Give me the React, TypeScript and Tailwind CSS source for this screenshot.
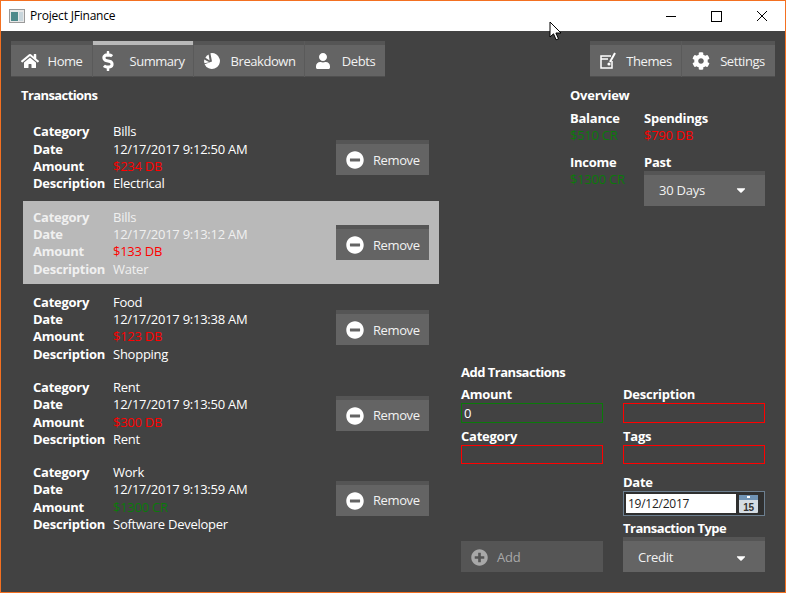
import React from 'react';
import { FaHome, FaDollarSign, FaUser, FaCog, FaMinusCircle, FaPlusCircle, FaCaretDown } from 'react-icons/fa';

type Tx = { category: string; date: string; amount: string; credit?: boolean; description: string; selected?: boolean };

const transactions: Tx[] = [
  { category: 'Bills', date: '12/17/2017 9:12:50 AM', amount: '$234 DB', description: 'Electrical' },
  { category: 'Bills', date: '12/17/2017 9:13:12 AM', amount: '$133 DB', description: 'Water', selected: true },
  { category: 'Food', date: '12/17/2017 9:13:38 AM', amount: '$123 DB', description: 'Shopping' },
  { category: 'Rent', date: '12/17/2017 9:13:50 AM', amount: '$300 DB', description: 'Rent' },
  { category: 'Work', date: '12/17/2017 9:13:59 AM', amount: '$1300 CR', credit: true, description: 'Software Developer' },
];

const ThemesIcon = () => (
  <svg width="18" height="18" viewBox="0 0 18 18" fill="none" stroke="#fff" strokeWidth="1.5">
    <path d="M12 4H2v12h11V9" />
    <path d="M2 7h7" />
    <path d="M16 1l-5 9" strokeWidth="2" />
    <circle cx="10" cy="12" r="1.6" fill="#fff" stroke="none" />
  </svg>
);

const PieIcon = () => (
  <svg width="18" height="18" viewBox="0 0 18 18" fill="#fff">
    <path d="M9 9.5L7.4 1.2A8 8 0 1 1 1.6 12.2z" />
    <path d="M6.6 8.4L5.6 2.6A8 8 0 0 0 2.4 5.8z" />
    <path d="M6.4 10.2L1.4 11.2A8 8 0 0 1 1.2 7.6z" />
  </svg>
);

const NavButton = ({ icon, label, width, gap, active }: { icon: React.ReactNode; label: string; width: string; gap: string; active?: boolean }) => (
  <div className={`flex flex-col ${width} border-r border-[#5a5a5a] last:border-r-0`}>
    <div className={`h-[4px] ${active ? 'bg-[#b9b9b9]' : 'bg-[#555555]'}`} />
    <div className={`flex h-[31px] items-center justify-center pt-[1px] ${gap} bg-[#646464] tracking-[-0.45px] text-[#f2f2f2]`}>
      {icon}
      <span className="pt-[1px]">{label}</span>
    </div>
    <div className="h-[1px] bg-[#4f4f4f]" />
  </div>
);

const RemoveButton = () => (
  <div className="flex w-[93px] flex-col">
    <div className="h-[4px] bg-[#555555]" />
    <div className="flex h-[31px] items-center gap-[9px] bg-[#646464] pl-[10px] pt-[1px] tracking-[-0.4px] text-[#f2f2f2]">
      <FaMinusCircle className="text-[18px] text-white" />
      <span className="pt-[1px]">Remove</span>
    </div>
  </div>
);

const Dropdown = ({ label, height, inset }: { label: string; height: string; inset: string }) => (
  <div className="flex w-full flex-col">
    <div className="h-[4px] bg-[#555555]" />
    <div className={`flex ${height} ${inset} items-center justify-between bg-[#646464] pl-[15px] pr-[17px] text-[#f2f2f2]`}>
      <span>{label}</span>
      <FaCaretDown className="text-[14px] text-white" />
    </div>
  </div>
);

const Row = ({ tx }: { tx: Tx }) => (
  <div className={`flex h-[83.16px] items-center justify-between pl-[10px] pr-[10px] ${tx.selected ? 'bg-[#b9b9b9]' : ''}`}>
    <div className={`grid grid-cols-[80px_1fr] pt-[1px] leading-[17.29px] ${tx.selected ? 'text-[#f0f0f0]' : 'text-white'}`}>
      <b>Category</b><span>{tx.category}</span>
      <b>Date</b><span>{tx.date}</span>
      <b>Amount</b><span className={tx.credit ? 'text-[#0a7a0a]' : 'text-[#ff0000]'}>{tx.amount}</span>
      <b>Description</b><span>{tx.description}</span>
    </div>
    <RemoveButton />
  </div>
);

const Field = ({ label, ok, value, height }: { label: string; ok?: boolean; value?: string; height: string }) => (
  <div className="flex flex-col">
    <b className="h-[17px] leading-[17px] text-white">{label}</b>
    <div className={`${height} border ${ok ? 'border-[#0a7a0a]' : 'border-[#ff0000]'} pl-[2px] leading-[18px] text-white`}>{value}</div>
  </div>
);

export default function App() {
  return (
    <div className="relative flex h-[593px] w-[786px] flex-col overflow-hidden border border-[#f37021] bg-[#424242] text-[13px] font-['Open_Sans','Noto_Sans',sans-serif] tracking-[-0.25px]">
      {/* title bar */}
      <div className="flex h-[30px] shrink-0 items-center bg-white pl-[8px] text-[12px] tracking-[-0.2px] text-black">
        <svg width="16" height="14" viewBox="0 0 16 14" className="mr-[5px]">
          <rect x="0.5" y="0.5" width="15" height="13" fill="#e8e8e8" stroke="#9a9a9a" />
          <rect x="2" y="3" width="7" height="9" fill="#4f8a8b" />
          <rect x="10" y="3" width="4" height="9" fill="#c9d6dc" />
        </svg>
        <span>Project JFinance</span>
        <div className="ml-auto flex items-center gap-[35px] pr-[18px]">
          <div className="h-[1px] w-[10px] bg-black" />
          <div className="h-[11px] w-[11px] border border-black" />
          <svg width="10" height="10" viewBox="0 0 10 10" stroke="#000" strokeWidth="1">
            <path d="M0 0l10 10M10 0L0 10" />
          </svg>
        </div>
      </div>

      {/* nav */}
      <div className="mt-[10px] flex justify-between pl-[10px] pr-[10px]">
        <div className="flex">
          <NavButton width="w-[82px]" gap="gap-[9px]" icon={<FaHome className="text-[18px] text-white" />} label="Home" />
          <NavButton width="w-[101px]" gap="gap-[11px] pr-[3px]" active icon={<FaDollarSign className="text-[20px] text-white" />} label="Summary" />
          <NavButton width="w-[111px]" gap="gap-[10px]" icon={<PieIcon />} label="Breakdown" />
          <NavButton width="w-[80px]" gap="gap-[11px]" icon={<FaUser className="text-[16px] text-white" />} label="Debts" />
        </div>
        <div className="flex">
          <NavButton width="w-[92px]" gap="gap-[9px]" icon={<ThemesIcon />} label="Themes" />
          <NavButton width="w-[93px]" gap="gap-[10px]" icon={<FaCog className="text-[18px] text-white" />} label="Settings" />
        </div>
      </div>

      {/* main */}
      <div className="flex flex-1 pl-[20px] pr-[20px] pt-[10px]">
        <div className="w-[418px]">
          <b className="block h-[17px] leading-[17px] tracking-[-0.6px] text-white">Transactions</b>
          <div className="ml-[2px] mt-[12px] flex w-[416px] flex-col gap-[2px]">
            {transactions.map((tx, i) => <Row key={i} tx={tx} />)}
          </div>
        </div>

        <div className="ml-[22px] flex w-[304px] flex-col">
          {/* overview */}
          <div className="ml-[109px] flex flex-col">
            <b className="h-[17px] leading-[17px] text-white">Overview</b>
            <div className="mt-[6px] grid grid-cols-[74px_121px] leading-[17px]">
              <b className="text-white">Balance</b>
              <b className="text-white">Spendings</b>
              <span className="text-[#0a7a0a]">$510 CR</span>
              <span className="text-[#ff0000]">$790 DB</span>
              <b className="mt-[10px] text-white">Income</b>
              <b className="mt-[10px] text-white">Past</b>
              <span className="text-[#0a7a0a]">$1300 CR</span>
              <Dropdown label="30 Days" height="h-[31px]" inset="pb-[1px]" />
            </div>
          </div>

          {/* add form */}
          <div className="mt-[158px] grid grid-cols-[142px_142px] gap-x-[20px]">
            <b className="col-span-2 h-[17px] leading-[17px] tracking-[-0.5px] text-white">Add Transactions</b>
            <div className="mt-[5px] flex flex-col gap-[5px]">
              <Field label="Amount" ok value="0" height="h-[20px]" />
              <Field label="Category" height="h-[19px]" />
              <div className="mt-auto flex h-[31px] items-center gap-[9px] bg-[#555555] pl-[10px] pt-[1px] text-[#a8a8a8]">
                <FaPlusCircle className="text-[17px] text-[#a8a8a8]" />
                <span className="pt-[1px]">Add</span>
              </div>
            </div>
            <div className="mt-[5px] flex flex-col">
              <Field label="Description" height="h-[20px]" />
              <div className="mt-[5px]">
                <Field label="Tags" height="h-[19px]" />
              </div>
              <b className="mt-[10px] h-[17px] leading-[17px] text-white">Date</b>
              <div className="flex h-[25px] items-center gap-[3px] border border-[#6c7f90] bg-[#2f2f2f] pl-[2px]">
                <div className="flex h-[19px] w-[110px] items-center bg-white pl-[2px] text-[12px] text-[#222]">19/12/2017</div>
                <svg width="19" height="18" viewBox="0 0 19 18">
                  <rect x="0" y="0" width="19" height="18" rx="1" fill="#d5dde4" />
                  <rect x="0" y="0" width="19" height="5" fill="#6f93b5" />
                  <rect x="8" y="1" width="3" height="2" fill="#fff" />
                  <text x="9.5" y="16" textAnchor="middle" fontSize="10" fontWeight="700" fill="#333" fontFamily="Liberation Sans, sans-serif">15</text>
                </svg>
              </div>
              <b className="mt-[4px] h-[17px] leading-[17px] tracking-[-0.5px] text-white">Transaction Type</b>
              <Dropdown label="Credit" height="h-[31px]" inset="pt-[2px]" />
            </div>
          </div>
        </div>
      </div>

      {/* mouse pointer over the title bar */}
      <svg width="13" height="20" viewBox="0 0 13 20" className="absolute left-[548px] top-[20px]">
        <path d="M1 1v15l3.5-3.2 2.6 6 2.4-1-2.6-5.8H12z" fill="#fff" stroke="#000" strokeWidth="1" />
      </svg>
    </div>
  );
}
